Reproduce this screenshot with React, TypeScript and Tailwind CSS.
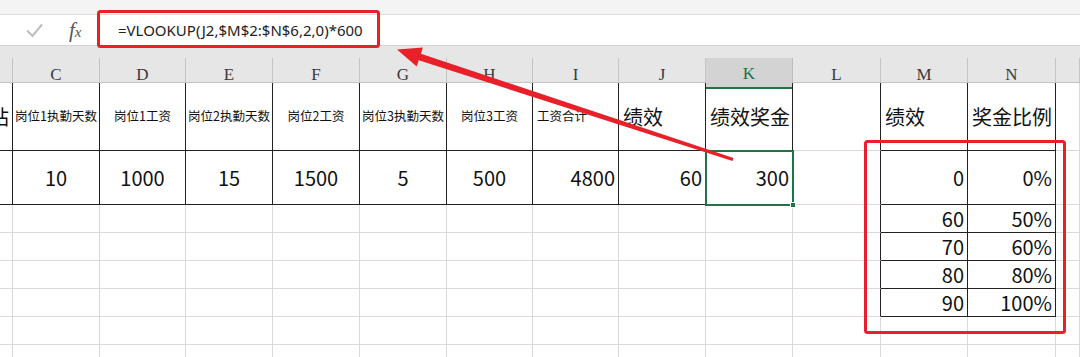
import React from 'react';

type Align = 'l' | 'c' | 'r';
type Cell = { t?: string; a?: Align; small?: boolean };

const letters = ['', 'C', 'D', 'E', 'F', 'G', 'H', 'I', 'J', 'K', 'L', 'M', 'N', ''];

const rows: Cell[][] = [
  [
    { t: '站', a: 'r' },
    { t: '岗位1执勤天数', a: 'c', small: true },
    { t: '岗位1工资', a: 'c', small: true },
    { t: '岗位2执勤天数', a: 'c', small: true },
    { t: '岗位2工资', a: 'c', small: true },
    { t: '岗位3执勤天数', a: 'c', small: true },
    { t: '岗位3工资', a: 'c', small: true },
    { t: '工资合计', a: 'l', small: true },
    { t: '绩效', a: 'l' },
    { t: '绩效奖金', a: 'l' },
    {},
    { t: '绩效', a: 'l' },
    { t: '奖金比例', a: 'l' },
    {},
  ],
  [
    {},
    { t: '10', a: 'c' },
    { t: '1000', a: 'c' },
    { t: '15', a: 'c' },
    { t: '1500', a: 'c' },
    { t: '5', a: 'c' },
    { t: '500', a: 'c' },
    { t: '4800', a: 'r' },
    { t: '60', a: 'r' },
    { t: '300', a: 'r' },
    {},
    { t: '0', a: 'r' },
    { t: '0%', a: 'r' },
    {},
  ],
];

const lookup = [
  ['60', '50%'],
  ['70', '60%'],
  ['80', '80%'],
  ['90', '100%'],
];

for (let i = 0; i < 6; i++) {
  const row: Cell[] = Array.from({ length: 14 }, () => ({}));
  if (i < 4) {
    row[11] = { t: lookup[i][0], a: 'r' };
    row[12] = { t: lookup[i][1], a: 'r' };
  }
  rows.push(row);
}

// which borders are drawn dark (the two bordered tables)
const darkRight = (r: number, c: number) => (r < 2 && c <= 9) || (r < 6 && c >= 10 && c <= 12);
const darkBottom = (r: number, c: number) => (r < 2 && c <= 9) || (r < 6 && c >= 11 && c <= 12);

const alignClass = (a?: Align) =>
  a === 'l' ? 'justify-start pl-[4px]' : a === 'r' ? 'justify-end pr-[3px]' : 'justify-center';

const GRID = 'grid grid-cols-[13px_87px_86px_87px_87px_87px_86px_86px_87px_87px_88px_87px_88px_24px]';

const App: React.FC = () => {
  return (
    <div className="relative w-[1080px] h-[357px] overflow-hidden bg-white font-['Noto_Sans_CJK_SC','Noto_Sans',sans-serif] text-[#111]">
      {/* ribbon edge */}
      <div className="h-[15px] bg-[#f4f4f4] border-b border-[#dedede]" />

      {/* formula bar */}
      <div className="h-[31px] flex bg-white border-b border-[#d4d4d4]">
        <div className="w-[100px] flex items-center">
          <svg width="17" height="15" viewBox="0 0 17 15" className="ml-[26px]">
            <polyline points="1,7.5 6.5,13 16,1.5" fill="none" stroke="#bdbdbd" strokeWidth="2" />
          </svg>
          <span className="ml-[26px] font-['Liberation_Serif',serif] italic text-[21px] text-[#555] leading-none">
            f<span className="text-[15px]">x</span>
          </span>
        </div>
        <div className="flex-1 flex items-center pl-[18px] font-['Noto_Sans',sans-serif] text-[15px] text-[#222]">
          =VLOOKUP(J2,$M$2:$N$6,2,0)*600
        </div>
      </div>

      <div className="h-[12px] bg-[#e6e6e6]" />

      {/* column headers */}
      <div className={`${GRID} h-[25px] bg-[#e6e6e6] border-b border-[#c4c4c4]`}>
        {letters.map((l, i) => (
          <div
            key={i}
            className={
              i === 9
                ? 'flex items-center justify-center pt-[3px] border-r border-[#bdbdbd] bg-[#d3d3d3] border-b-2 border-b-[#217346] text-[#217346] font-["Liberation_Serif",serif] text-[17px]'
                : 'flex items-center justify-center pt-[3px] border-r border-[#c4c4c4] text-[#3a3a3a] font-["Liberation_Serif",serif] text-[17px]'
            }
          >
            {l}
          </div>
        ))}
      </div>

      {/* cells */}
      <div className={`${GRID} grid-rows-[68px_54px_28px_28px_28px_28px_28px_28px]`}>
        {rows.map((row, r) =>
          row.map((cell, c) => (
            <div
              key={`${r}-${c}`}
              className={[
                'flex items-center overflow-hidden whitespace-nowrap border-r border-b',
                darkRight(r, c) ? 'border-r-[#222]' : 'border-r-[#dadada]',
                darkBottom(r, c) ? 'border-b-[#222]' : 'border-b-[#dadada]',
                cell.small ? 'text-[12.5px]' : 'text-[20px]',
                alignClass(cell.a),
              ].join(' ')}
            >
              {cell.t}
            </div>
          ))
        )}
      </div>

      {/* selected cell K2 */}
      <div className="absolute left-[705px] top-[150px] w-[89px] h-[56px] border-2 border-[#217346]" />
      <div className="absolute left-[790px] top-[202px] w-[6px] h-[6px] bg-[#217346] border border-white" />

      {/* annotations */}
      <svg className="absolute inset-0 pointer-events-none" width="1080" height="357" viewBox="0 0 1080 357">
        <rect x="98.5" y="11.5" width="280" height="35" rx="2" fill="none" stroke="#e8202a" strokeWidth="3" />
        <rect x="865.5" y="141.5" width="199" height="191" rx="2" fill="none" stroke="#e8202a" strokeWidth="3" />
        <polygon
          points="397,49.5 422.9,47.5 420.9,53.7 733.5,158.1 732.5,160.9 418.7,60.3 416.7,66.5"
          fill="#e8202a"
        />
      </svg>
    </div>
  );
};

export default App;
